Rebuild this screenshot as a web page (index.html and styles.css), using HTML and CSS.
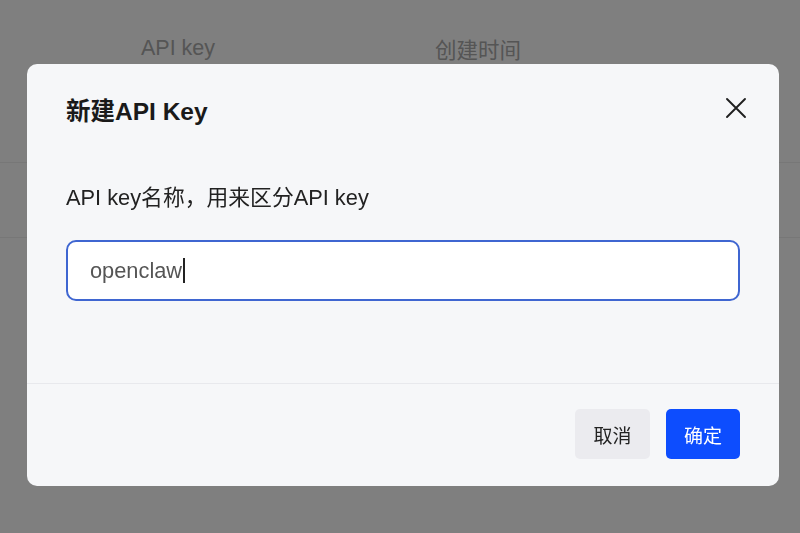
FILE: index.html
```html
<!DOCTYPE html>
<html lang="zh-CN">
<head>
<meta charset="utf-8">
<title>API Keys</title>
<link rel="stylesheet" href="styles.css">
</head>
<body>
  <main class="page">
    <div class="table">
      <div class="thead">
        <div class="th">API key</div>
        <div class="th">创建时间</div>
      </div>
      <div class="tr"></div>
      <div class="tr tall"></div>
    </div>
  </main>

  <div class="mask">
    <div class="dialog" role="dialog" aria-labelledby="dlg-title">
      <header class="dialog-head">
        <h2 id="dlg-title" class="dialog-title">新建API Key</h2>
        <button class="close" aria-label="关闭">
          <svg width="22" height="22" viewBox="0 0 22 22" fill="none" stroke="#1f1f1f" stroke-width="1.9" stroke-linecap="round">
            <path d="M2 2L20 20M20 2L2 20"/>
          </svg>
        </button>
      </header>
      <section class="dialog-body">
        <label class="field-label" for="key-name">API key名称，用来区分API key</label>
        <div class="input"><span class="input-text">openclaw</span><span class="caret"></span></div>
      </section>
      <footer class="dialog-foot">
        <button class="btn btn-cancel">取消</button>
        <button class="btn btn-primary">确定</button>
      </footer>
    </div>
  </div>
</body>
</html>
```

FILE: styles.css
```css
* { box-sizing: border-box; }

html, body {
  margin: 0;
  padding: 0;
  width: 800px;
  height: 533px;
  overflow: hidden;
  font-family: "Liberation Sans", "Noto Sans CJK SC", sans-serif;
  background: #ffffff;
}

/* page underneath the mask */
.page {
  height: 533px;
  background: #ffffff;
}

.thead {
  display: grid;
  grid-template-columns: 300px 300px;
  padding-left: 28px;
  height: 96px;
  align-items: center;
}

.th {
  text-align: center;
  font-size: 21.5px;
  color: #aaaaaa;
}

.tr {
  height: 67px;
  border-bottom: 1px solid #eeeeee;
}

.tr.tall { height: 75px; }

/* modal */
.mask {
  position: fixed;
  inset: 0;
  background: rgba(0, 0, 0, 0.5);
  padding: 64px 0 0 27px;
}

.dialog {
  width: 752px;
  background: #f6f7f9;
  border-radius: 10px;
  display: flex;
  flex-direction: column;
}

.dialog-head {
  display: flex;
  align-items: center;
  justify-content: space-between;
  padding: 33px 32px 0 39px;
  height: 63px;
}

.dialog-title {
  margin: 0;
  font-size: 24.5px;
  line-height: 30px;
  font-weight: 700;
  color: #1a1a1a;
}

.close {
  border: 0;
  background: none;
  padding: 0;
  width: 22px;
  height: 22px;
  margin-top: -8px;
  display: flex;
}

.dialog-body {
  padding: 57px 39px 82px;
  display: flex;
  flex-direction: column;
}

.field-label {
  font-size: 21.8px;
  line-height: 28px;
  color: #222222;
}

.input {
  margin-top: 28px;
  height: 61px;
  background: #ffffff;
  border: 2px solid #3f66d1;
  border-radius: 10px;
  padding: 0 22px;
  display: flex;
  align-items: center;
}

.input-text {
  font-size: 21.8px;
  color: #555555;
}

.caret {
  width: 1.5px;
  height: 25px;
  background: #222222;
  margin-left: 1px;
}

.dialog-foot {
  border-top: 1px solid #e8e9ed;
  padding: 25px 39px 27px;
  display: flex;
  justify-content: flex-end;
  gap: 16px;
}

.btn {
  height: 50px;
  width: 75px;
  border: 0;
  border-radius: 5px;
  font-family: inherit;
  font-size: 19px;
}

.btn-cancel {
  background: #ebebef;
  color: #222222;
}

.btn-primary {
  background: #0d4dfe;
  color: #ffffff;
  width: 74px;
}
```
